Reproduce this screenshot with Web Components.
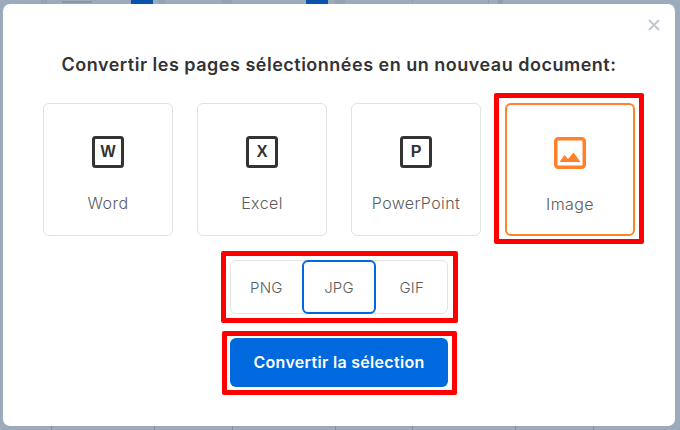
<!DOCTYPE html>
<html lang="fr">
<head>
<meta charset="utf-8">
<title>Convertir</title>
<style>
    html, body{
        margin: 0;
        height: 100%;
    }

    body{
        width: 680px;
        height: 430px;
        overflow: hidden;
        font-family: Inter, "Liberation Sans", sans-serif;
        background-color: #9babbb;
        background-image:
            linear-gradient(#0a55ab, #0a55ab),
            linear-gradient(#0a55ab, #0a55ab),
            linear-gradient(#8796a6, #8796a6),
            linear-gradient(90deg, transparent 41px, #93a3b4 41px, #93a3b4 47px, transparent 47px,
                transparent 158px, #93a3b4 158px, #93a3b4 165px, transparent 165px,
                transparent 222px, #93a3b4 222px, #93a3b4 232px, transparent 232px,
                transparent 335px, #93a3b4 335px, #93a3b4 345px, transparent 345px,
                transparent 412px, #8e9eaf 412px, #8e9eaf 413px, transparent 413px,
                transparent 488px, #8e9eaf 488px, #8e9eaf 489px, transparent 489px,
                transparent 498px, #8e9eaf 498px, #8e9eaf 503px, transparent 503px),
            linear-gradient(90deg, transparent 51px, #84939f 51px, #84939f 52px, transparent 52px,
                transparent 154px, #84939f 154px, #84939f 155px, transparent 155px,
                transparent 232px, #84939f 232px, #84939f 233px, transparent 233px,
                transparent 335px, #84939f 335px, #84939f 336px, transparent 336px,
                transparent 412px, #84939f 412px, #84939f 413px, transparent 413px,
                transparent 515px, #84939f 515px, #84939f 516px, transparent 516px,
                transparent 593px, #84939f 593px, #84939f 594px, transparent 594px);
        background-size: 22px 4px, 22px 4px, 30px 2px, 100% 4px, 100% 4px;
        background-position: 131px 0, 306px 0, 62px 1px, 0 0, 0 426px;
        background-repeat: no-repeat;
    }
</style>
</head>
<body>
<convert-dialog>
    <span slot="title">Convertir les pages sélectionnées en un nouveau document:</span>
    <type-card slot="cards" letter="W">Word</type-card>
    <type-card slot="cards" letter="X">Excel</type-card>
    <type-card slot="cards" letter="P">PowerPoint</type-card>
    <red-frame slot="cards" style="--top:-10px;--right:-9px;--bottom:-8px;--left:-11px">
        <type-card selected>Image</type-card>
    </red-frame>
    <red-frame slot="formats" style="--top:-9px;--right:-10px;--bottom:-9px;--left:-9px">
        <format-group>
            <format-option>PNG</format-option>
            <format-option selected>JPG</format-option>
            <format-option>GIF</format-option>
        </format-group>
    </red-frame>
    <red-frame slot="action" style="--top:-7px;--right:-9px;--bottom:-8px;--left:-8px">
        <convert-button>Convertir la sélection</convert-button>
    </red-frame>
</convert-dialog>

<script>
"use strict"

class ConvertDialog extends HTMLElement{
    constructor(){
        super();
        this.attachShadow({mode: "open"});
    }

    connectedCallback(){
        this.shadowRoot.innerHTML = `${this.styles()} ${this.render()}`;
    }

    render(){
        return `
            <button class="close" aria-label="Fermer">
                <svg width="12" height="12" viewBox="0 0 12 12">
                    <path d="M1 1L11 11M11 1L1 11" stroke="#c1c8d3" stroke-width="2" fill="none"/>
                </svg>
            </button>
            <h2><slot name="title"></slot></h2>
            <div class="cards"><slot name="cards"></slot></div>
            <div class="formats"><slot name="formats"></slot></div>
            <div class="action"><slot name="action"></slot></div>
        `
    }

    styles(){
        return `
        <style>
        :host{
            display: block;
            position: relative;
            box-sizing: border-box;
            width: 672px;
            height: 422px;
            margin: 4px 0 0 3px;
            padding: 0 40px;
            background: #fff;
            border-radius: 7px;
        }

        h2{
            margin: 0;
            padding-top: 50px;
            height: 49px;
            line-height: 22px;
            font-size: 18px;
            font-weight: 600;
            letter-spacing: 0.5px;
            color: #333;
            text-align: center;
            white-space: nowrap;
        }

        .close{
            position: absolute;
            top: 15px;
            right: 15px;
            padding: 0;
            border: 0;
            background: none;
            line-height: 0;
        }

        .cards{
            display: grid;
            grid-template-columns: repeat(4, 130px);
            gap: 24px;
        }

        .formats{
            display: flex;
            justify-content: center;
            margin-top: 24px;
        }

        .action{
            display: flex;
            justify-content: center;
            margin-top: 24px;
        }
        </style>
        `
    }
}

class TypeCard extends HTMLElement{
    constructor(){
        super();
        this.attachShadow({mode: "open"});
    }

    connectedCallback(){
        this.shadowRoot.innerHTML = `${this.styles()} ${this.render()}`;
    }

    icon(){
        if(this.hasAttribute("selected")){
            return `
                <svg class="picture" width="32" height="32" viewBox="0 0 32 32">
                    <rect x="1.75" y="1.75" width="28.5" height="28.5" rx="2.5" fill="none" stroke="#ff812c" stroke-width="3.5"/>
                    <path d="M5.5 25L10.5 18L14 22L19.5 15.5L26.5 25Z" fill="#ff812c"/>
                </svg>
            `
        }
        return `<span class="doc">${this.getAttribute("letter")}</span>`
    }

    render(){
        return `
            ${this.icon()}
            <span class="label"><slot></slot></span>
        `
    }

    styles(){
        return `
        <style>
        :host{
            display: flex;
            flex-direction: column;
            align-items: center;
            box-sizing: border-box;
            height: 133px;
            padding-top: 32px;
            border: 1px solid #e3e3e3;
            border-radius: 6px;
            background: #fff;
        }

        :host([selected]){
            border: 2px solid #ff812c;
        }

        .doc{
            display: flex;
            align-items: center;
            justify-content: center;
            box-sizing: border-box;
            width: 32px;
            height: 32px;
            border: 3.5px solid #333;
            border-radius: 3.5px;
            font: bold 16px "Liberation Sans", sans-serif;
            color: #333;
        }

        .picture{
            display: block;
        }

        .label{
            margin-top: 25px;
            line-height: 20px;
            font-size: 16px;
            font-weight: 300;
            letter-spacing: 0.4px;
            color: #5c5c5c;
        }
        </style>
        `
    }
}

class FormatGroup extends HTMLElement{
    constructor(){
        super();
        this.attachShadow({mode: "open"});
        this.shadowRoot.innerHTML = `
            <style>
            :host{
                display: flex;
                box-sizing: border-box;
                width: 218px;
                height: 54px;
                border: 1px solid #e3e3e3;
                border-radius: 6px;
            }
            </style>
            <slot></slot>
        `;
    }
}

class FormatOption extends HTMLElement{
    constructor(){
        super();
        this.attachShadow({mode: "open"});
        this.shadowRoot.innerHTML = `
            <style>
            :host{
                display: flex;
                flex: 1;
                align-items: center;
                justify-content: center;
                box-sizing: border-box;
                margin: -1px 0;
                font-size: 15px;
                font-weight: 300;
                letter-spacing: 0.2px;
                color: #5c5c5c;
                border-radius: 6px;
            }

            :host([selected]){
                border: 2px solid #0069de;
            }
            </style>
            <slot></slot>
        `;
    }
}

class ConvertButton extends HTMLElement{
    constructor(){
        super();
        this.attachShadow({mode: "open"});
        this.shadowRoot.innerHTML = `
            <style>
            :host{
                display: flex;
                align-items: center;
                justify-content: center;
                box-sizing: border-box;
                width: 218px;
                height: 49px;
                padding-bottom: 2px;
                background: #0069de;
                border-radius: 6px;
                font-size: 16px;
                font-weight: 600;
                letter-spacing: 0.3px;
                color: #fff;
                white-space: nowrap;
            }
            </style>
            <slot></slot>
        `;
    }
}

// red annotation drawn over whatever it wraps
class RedFrame extends HTMLElement{
    constructor(){
        super();
        this.attachShadow({mode: "open"});
        this.shadowRoot.innerHTML = `
            <style>
            :host{
                display: block;
                position: relative;
            }

            .mark{
                position: absolute;
                top: var(--top);
                right: var(--right);
                bottom: var(--bottom);
                left: var(--left);
                border: 5px solid #f00;
                border-radius: 2px;
                pointer-events: none;
            }
            </style>
            <slot></slot>
            <div class="mark"></div>
        `;
    }
}

customElements.define('convert-dialog', ConvertDialog);
customElements.define('type-card', TypeCard);
customElements.define('format-group', FormatGroup);
customElements.define('format-option', FormatOption);
customElements.define('convert-button', ConvertButton);
customElements.define('red-frame', RedFrame);
</script>
</body>
</html>
